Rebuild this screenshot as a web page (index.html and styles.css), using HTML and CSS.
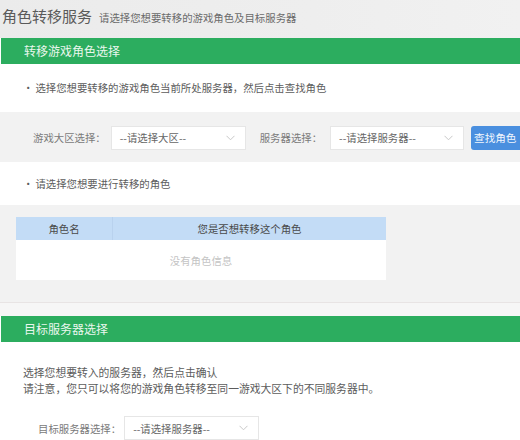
FILE: index.html
```html
<!DOCTYPE html>
<html lang="zh-CN">
<head>
<meta charset="utf-8">
<title>角色转移服务</title>
<link rel="stylesheet" href="styles.css">
</head>
<body>
<div class="page">
  <header class="top">
    <h1 class="title">角色转移服务</h1>
    <span class="subtitle">请选择您想要转移的游戏角色及目标服务器</span>
  </header>

  <div class="bar">转移游戏角色选择</div>

  <p class="hint"><span class="dot">·</span>选择您想要转移的游戏角色当前所处服务器，然后点击查找角色</p>

  <div class="band filter">
    <span class="label">游戏大区选择：</span>
    <div class="select sel-zone">
      <span>--请选择大区--</span>
      <svg class="chev" width="9" height="6" viewBox="0 0 9 6"><path d="M0.5 0.8 L4.5 4.8 L8.5 0.8" fill="none" stroke="#c8c8c8" stroke-width="1"/></svg>
    </div>
    <span class="label label-server">服务器选择：</span>
    <div class="select sel-server">
      <span>--请选择服务器--</span>
      <svg class="chev" width="9" height="6" viewBox="0 0 9 6"><path d="M0.5 0.8 L4.5 4.8 L8.5 0.8" fill="none" stroke="#c8c8c8" stroke-width="1"/></svg>
    </div>
    <button class="btn">查找角色</button>
  </div>

  <p class="hint hint2"><span class="dot">·</span>请选择您想要进行转移的角色</p>

  <div class="band tableband">
    <div class="table">
      <div class="thead">
        <div class="th th-name">角色名</div>
        <div class="th th-q">您是否想转移这个角色</div>
      </div>
      <div class="tbody">没有角色信息</div>
    </div>
  </div>
  <div class="gap"></div>

  <div class="bar">目标服务器选择</div>

  <div class="target">
    <p class="line">选择您想要转入的服务器，然后点击确认</p>
    <p class="line">请注意，您只可以将您的游戏角色转移至同一游戏大区下的不同服务器中。</p>
    <div class="target-row">
      <span class="label">目标服务器选择：</span>
      <div class="select sel-target">
        <span>--请选择服务器--</span>
        <svg class="chev" width="9" height="6" viewBox="0 0 9 6"><path d="M0.5 0.8 L4.5 4.8 L8.5 0.8" fill="none" stroke="#c8c8c8" stroke-width="1"/></svg>
      </div>
    </div>
  </div>
</div>
</body>
</html>
```

FILE: styles.css
```css
* { box-sizing: border-box; }
html, body {
  margin: 0;
  padding: 0;
  background: #ffffff;
  overflow: hidden;
}
body {
  font-family: "Noto Sans CJK SC", "Noto Sans", sans-serif;
  color: #5c5c5c;
  width: 520px;
  height: 440px;
}
.page { width: 520px; }

.top {
  height: 38px;
  background: linear-gradient(90deg, #ebebeb 0%, #eeeeee 60%, #f1f1f1 100%);
  display: flex;
  align-items: baseline;
  padding: 5px 0 0 2px;
}
.title {
  margin: 0;
  font-size: 15px;
  font-weight: normal;
  line-height: 22px;
  color: #5a5a5a;
}
.subtitle {
  font-size: 10.4px;
  color: #6a6a6a;
  margin-left: 7px;
}

.bar {
  height: 26px;
  margin-left: 1px;
  background: #2cad5f;
  color: #eaf7ee;
  font-size: 12px;
  line-height: 26px;
  padding-left: 23px;
}

.hint {
  margin: 0;
  font-size: 10.4px;
  line-height: 16px;
  padding: 16px 0 16px 23px;
  color: #5c5c5c;
}
.dot { margin-right: 2px; }
.hint2 { padding: 14px 0 13px 23px; }

.band { background: #f2f2f2; }

.filter {
  height: 50px;
  display: flex;
  align-items: center;
  padding-left: 33px;
  padding-top: 1px;
}
.label {
  font-size: 10.4px;
  color: #7a7a7a;
  white-space: nowrap;
}
.select {
  height: 24px;
  background: #fff;
  border: 1px solid #e6e6e6;
  display: flex;
  align-items: center;
  justify-content: space-between;
  padding: 0 8px 0 8px;
  font-size: 10.4px;
  color: #666;
  flex: none;
}
.select .chev { margin-right: 2px; }
.sel-zone { width: 135px; margin-left: 5px; }
.label-server { margin-left: 14px; }
.sel-server { width: 134px; margin-left: 8px; }
.btn {
  flex: none;
  width: 54px;
  height: 24px;
  margin-left: 7px;
  border: none;
  border-radius: 3px;
  background: #4a8fdf;
  color: #f2f7fd;
  font-family: inherit;
  font-size: 10.6px;
  padding: 0 0 0 3px;
  text-align: left;
}

.tableband {
  padding: 12px 0 22px 16px;
  border-bottom: 1px solid #e8e4e4;
}
.table {
  width: 370px;
  background: #fff;
}
.thead {
  display: flex;
  height: 23px;
  background: #c3dcf6;
}
.th {
  font-size: 10.4px;
  color: #4a4a4a;
  line-height: 23px;
  text-align: center;
}
.th-name {
  width: 97px;
  border-right: 1px solid #b9d2ee;
}
.th-q { flex: 1; }
.tbody {
  height: 40px;
  line-height: 42px;
  text-align: center;
  font-size: 10.4px;
  color: #c4c4c4;
}
.gap {
  height: 13px;
  background: #f6f6f6;
}

.target { padding: 22px 0 0 23px; }
.line {
  margin: 0;
  font-size: 10.8px;
  line-height: 16px;
  color: #5c5c5c;
}
.target-row {
  display: flex;
  align-items: center;
  margin-top: 20px;
  padding-left: 15px;
}
.sel-target { width: 135px; margin-left: 3px; }
```
